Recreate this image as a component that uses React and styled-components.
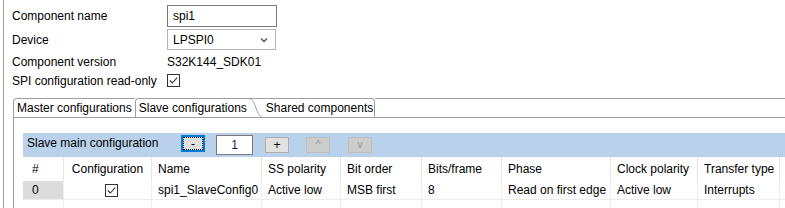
import React from 'react';
import styled, { createGlobalStyle } from 'styled-components';

const GlobalStyle = createGlobalStyle`
  html, body {
    margin: 0;
    padding: 0;
    background: #fff;
  }
  body {
    font-family: "Segoe UI", "Liberation Sans", Arial, sans-serif;
    font-size: 12px;
    color: #000;
  }
  * { box-sizing: border-box; }
`;

const Page = styled.div`
  width: 785px;
  height: 208px;
  overflow: hidden;
  padding-left: 3px;
`;

const Frame = styled.div`
  height: 100%;
  border-left: 1px solid #a0a0a0;
  padding: 5px 0 0 8px;
`;

const FormRow = styled.div`
  display: flex;
  align-items: center;
  height: ${p => p.h}px;
  margin-top: ${p => p.mt || 0}px;
`;

const Label = styled.div`
  width: 155px;
  white-space: nowrap;
`;

const TextBox = styled.div`
  width: 110px;
  height: 22px;
  border: 1px solid #7a7a7a;
  padding-left: 5px;
  line-height: 20px;
`;

const Combo = styled.div`
  width: 109px;
  height: 21px;
  border: 1px solid #b4b4b4;
  padding: 0 7px 0 5px;
  display: flex;
  align-items: center;
  justify-content: space-between;
`;

const Folder = styled.div`
  margin: 10px 0 0 1px;
`;

const TabStrip = styled.div`
  display: flex;
  height: 20px;
  border-bottom: 1px solid #a0a0a0;
`;

const Tab = styled.div`
  height: 19px;
  line-height: 18px;
  white-space: nowrap;
  border-top: 1px solid #a0a0a0;
  border-left: ${p => (p.first || p.selected ? '1px solid #a0a0a0' : 'none')};
  border-right: ${p => (p.last ? '1px solid #a0a0a0' : 'none')};
  border-radius: ${p => (p.first || p.selected ? '4px' : '0')} ${p => (p.last ? '4px' : '0')} 0 0;
  padding: 0 ${p => p.pr}px 0 ${p => p.pl}px;
  background: #fff;
`;

const TabFiller = styled.div`
  flex: 1;
  border-top: 1px solid #a0a0a0;
`;

const TabBody = styled.div`
  border-left: 1px solid #a0a0a0;
  padding: 15px 0 0 9px;
`;

const SectionBar = styled.div`
  display: flex;
  align-items: flex-start;
  height: 24px;
  padding: 2px 0 0 4px;
  background: #b9d1ea;
`;

const SectionTitle = styled.div`
  width: 154px;
  line-height: 17px;
  white-space: nowrap;
`;

const FocusButton = styled.div`
  width: 24px;
  height: 17px;
  border: 2px solid #0078d7;
  display: flex;
`;

const FocusInner = styled.div`
  flex: 1;
  border: 1px dotted #000;
  background: #e1e1e1;
  display: flex;
  align-items: center;
  justify-content: center;
  line-height: 1;
  font-size: 12px;
`;

const Spinner = styled.div`
  margin-left: 11px;
  width: 37px;
  height: 20px;
  border: 1px solid #7a7a7a;
  background: #fff;
  text-align: center;
  line-height: 18px;
  color: #2e0854;
`;

const SmallButton = styled.div`
  margin: 2px 0 0 ${p => p.ml}px;
  width: 24px;
  height: 16px;
  border: 1px solid ${p => (p.disabled ? '#bfbfbf' : '#adadad')};
  background: ${p => (p.disabled ? '#cccccc' : '#e1e1e1')};
  color: ${p => (p.disabled ? '#9a9a9a' : '#000')};
  display: flex;
  align-items: center;
  justify-content: center;
  font-size: ${p => (p.disabled ? '10px' : '12px')};
  line-height: 1;
`;

const cols = '41px 88px 110px 79px 81px 80px 109px 87px 82px 1fr';

const Row = styled.div`
  display: grid;
  grid-template-columns: ${cols};
  height: ${p => p.h}px;
  border-bottom: ${p => (p.lined ? '1px solid #ededed' : 'none')};
`;

const Cell = styled.div`
  display: flex;
  align-items: center;
  justify-content: ${p => (p.center ? 'center' : 'flex-start')};
  padding: 0 0 0 ${p => (p.pl !== undefined ? p.pl : 6)}px;
  border-right: 1px solid ${p => (p.head ? '#e3e3e3' : '#efefef')};
  background: ${p => (p.shaded ? '#dcdcdc' : 'transparent')};
  white-space: nowrap;
  overflow: hidden;
`;

function CheckBox() {
  return (
    <svg width="13" height="13" viewBox="0 0 13 13">
      <rect x="0.5" y="0.5" width="12" height="12" fill="#fff" stroke="#333" />
      <polyline points="2.8,6.5 5.3,9 10.2,3.6" fill="none" stroke="#333" strokeWidth="1.1" />
    </svg>
  );
}

function Chevron() {
  return (
    <svg width="8" height="6" viewBox="0 0 8 6">
      <polyline points="1,1.5 4,4.5 7,1.5" fill="none" stroke="#555" strokeWidth="1.4" />
    </svg>
  );
}

function TabCurve() {
  return (
    <svg width="16" height="20" viewBox="0 0 16 20" style={{ display: 'block', flex: 'none' }}>
      <path d="M0 0.5 H16" stroke="#a0a0a0" fill="none" />
      <path d="M0 0.5 C5 0.5 6 2 9 10 C11 16 13 19 16 19.5" stroke="#a0a0a0" fill="none" />
    </svg>
  );
}

const headers = ['#', 'Configuration', 'Name', 'SS polarity', 'Bit order', 'Bits/frame', 'Phase', 'Clock polarity', 'Transfer type', ''];

export default function App() {
  return (
    <Page>
      <GlobalStyle />
      <Frame>
        <FormRow h={22}>
          <Label>Component name</Label>
          <TextBox>spi1</TextBox>
        </FormRow>
        <FormRow h={21} mt={2}>
          <Label>Device</Label>
          <Combo>
            <span>LPSPI0</span>
            <Chevron />
          </Combo>
        </FormRow>
        <FormRow h={21} mt={1}>
          <Label>Component version</Label>
          <span>S32K144_SDK01</span>
        </FormRow>
        <FormRow h={15} mt={1}>
          <Label>SPI configuration read-only</Label>
          <CheckBox />
        </FormRow>

        <Folder>
          <TabStrip>
            <Tab first pl={3} pr={3}>Master configurations</Tab>
            <Tab selected pl={3} pr={0}>Slave configurations</Tab>
            <TabCurve />
            <Tab last pl={3} pr={1}>Shared components</Tab>
            <TabFiller />
          </TabStrip>
          <TabBody>
            <SectionBar>
              <SectionTitle>Slave main configuration</SectionTitle>
              <FocusButton>
                <FocusInner>-</FocusInner>
              </FocusButton>
              <Spinner>1</Spinner>
              <SmallButton ml={12}>+</SmallButton>
              <SmallButton ml={17} disabled>^</SmallButton>
              <SmallButton ml={18} disabled>v</SmallButton>
            </SectionBar>
            <Row h={24}>
              {headers.map((h, i) => (
                <Cell key={i} head pl={i === 0 ? 9 : i === 1 ? 0 : 6} center={i === 1}>{h}</Cell>
              ))}
            </Row>
            <Row h={19} lined>
              <Cell shaded pl={9}>0</Cell>
              <Cell center pl={8}><CheckBox /></Cell>
              <Cell>spi1_SlaveConfig0</Cell>
              <Cell>Active low</Cell>
              <Cell>MSB first</Cell>
              <Cell>8</Cell>
              <Cell>Read on first edge</Cell>
              <Cell>Active low</Cell>
              <Cell>Interrupts</Cell>
              <Cell />
            </Row>
            <Row h={19}>
              {headers.map((h, i) => <Cell key={i} />)}
            </Row>
          </TabBody>
        </Folder>
      </Frame>
    </Page>
  );
}
